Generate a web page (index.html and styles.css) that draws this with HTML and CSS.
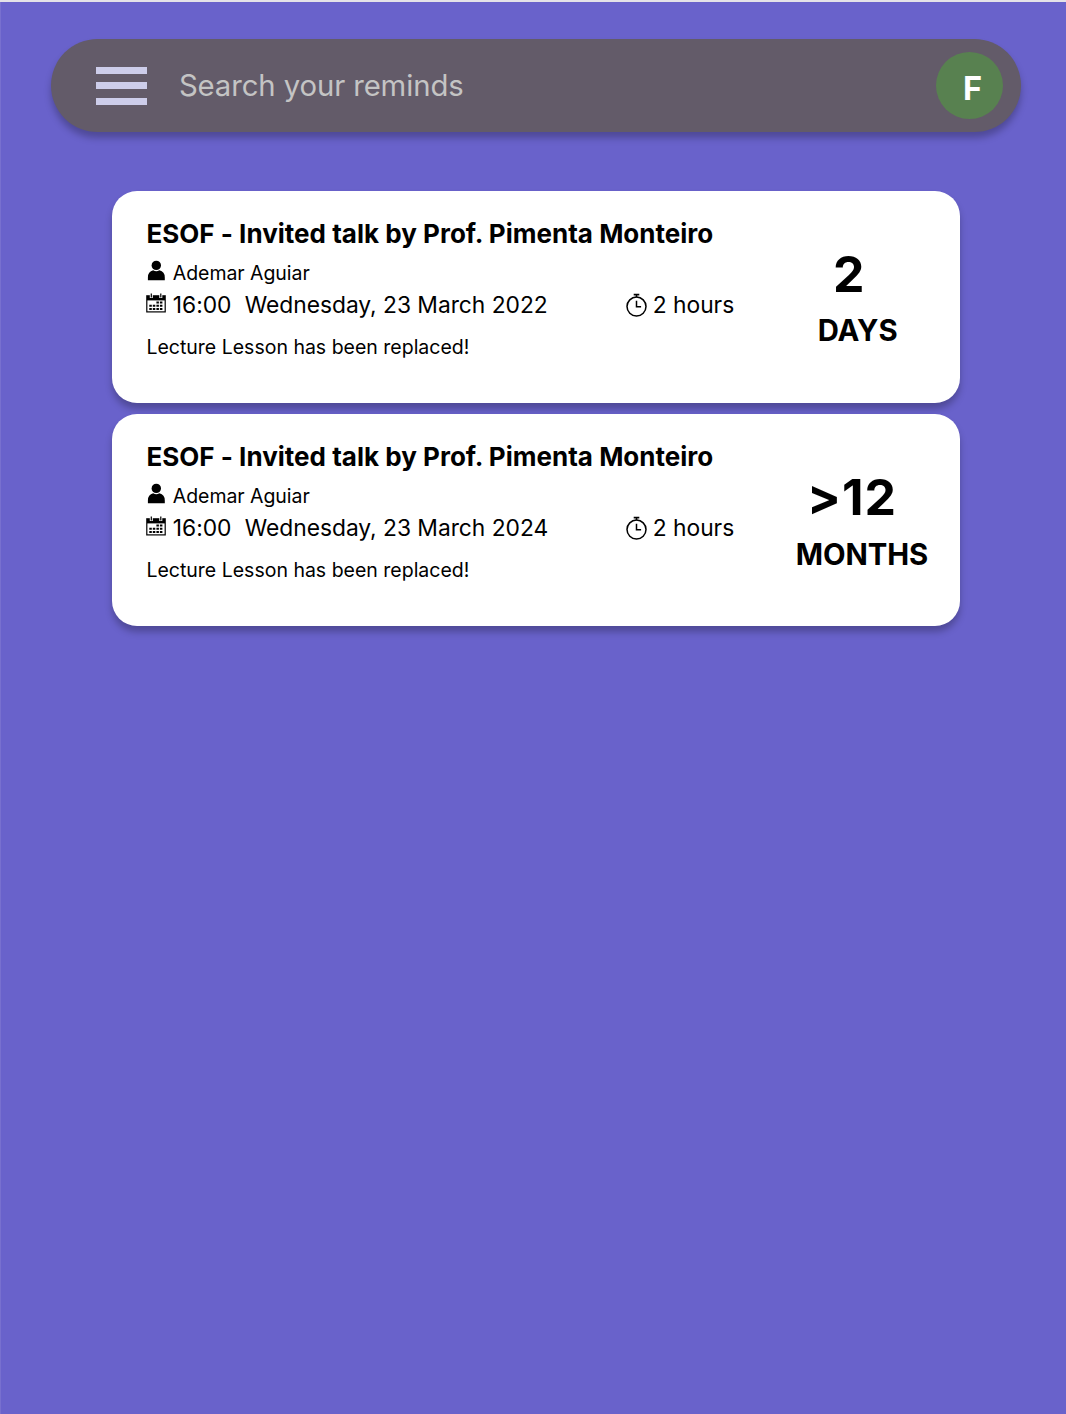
FILE: index.html
```html
<!DOCTYPE html>
<html lang="en">
<head>
<meta charset="utf-8">
<title>Reminds</title>
<link rel="stylesheet" href="styles.css">
</head>
<body>
<svg class="sprite" aria-hidden="true">
  <symbol id="person" viewBox="0 0 20 22">
    <circle cx="10.3" cy="5.4" r="4.7"/>
    <path d="M1.9 20.2V17.4Q1.9 11.4 7.2 10.2Q10.3 12.4 13.4 10.2Q18.8 11.4 18.8 17.4V20.2Z"/>
  </symbol>
  <symbol id="calendar" viewBox="0 0 20 20">
    <path d="M.2 2.2H19.8V19.5H.2Z"/>
    <path fill="#fff" d="M1.4 7.4H18.6V18.3H1.4Z"/>
    <path fill="none" stroke="#fff" stroke-width="3" d="M5.3 0V5M14.8 0V5"/>
    <path fill="none" stroke="#000" stroke-width="1.2" d="M5.3 .4V4.5M14.8 .4V4.5"/>
    <path d="M10.4 8.5h2.5v2h-2.5zM13.9 8.5h2.5v2h-2.5zM3.3 11.7h2.5v2H3.3zM6.8 11.7h2.5v2H6.8zM10.4 11.7h2.5v2h-2.5zM13.9 11.7h2.5v2h-2.5zM3.3 14.9h2.5v2H3.3zM6.8 14.9h2.5v2H6.8zM10.4 14.9h2.5v2h-2.5zM13.9 14.9h2.5v2h-2.5z"/>
  </symbol>
  <symbol id="timer" viewBox="0 0 22 24">
    <g fill="none" stroke="#000" stroke-width="1.5">
      <circle cx="11.5" cy="13.6" r="9.5"/>
      <path d="M11.5 7.8V13.8H16.1M11.5 1.8V4.3"/>
      <path stroke-width="1.7" d="M8.7 1.6H14.3"/>
    </g>
  </symbol>
</svg>
<header class="search">
  <div class="menu"><span></span><span></span><span></span></div>
  <div class="placeholder">Search your reminds</div>
  <div class="avatar">F</div>
</header>
<main class="list">
  <article class="card">
    <div class="details">
      <h2 class="title">ESOF - Invited talk by Prof. Pimenta Monteiro</h2>
      <div class="author"><svg class="icon-person"><use href="#person"/></svg><span>Ademar Aguiar</span></div>
      <div class="when">
        <svg class="icon-calendar"><use href="#calendar"/></svg><span class="time">16:00</span><span class="date">Wednesday, 23 March 2022</span>
        <svg class="icon-timer"><use href="#timer"/></svg><span class="duration">2 hours</span>
      </div>
      <p class="note">Lecture Lesson has been replaced!</p>
    </div>
    <div class="countdown days"><div class="amount">2</div><div class="unit">DAYS</div></div>
  </article>
  <article class="card">
    <div class="details">
      <h2 class="title">ESOF - Invited talk by Prof. Pimenta Monteiro</h2>
      <div class="author"><svg class="icon-person"><use href="#person"/></svg><span>Ademar Aguiar</span></div>
      <div class="when">
        <svg class="icon-calendar"><use href="#calendar"/></svg><span class="time">16:00</span><span class="date">Wednesday, 23 March 2024</span>
        <svg class="icon-timer"><use href="#timer"/></svg><span class="duration">2 hours</span>
      </div>
      <p class="note">Lecture Lesson has been replaced!</p>
    </div>
    <div class="countdown months"><div class="amount">&gt;12</div><div class="unit">MONTHS</div></div>
  </article>
</main>
</body>
</html>
```
FILE: styles.css
```css
* { box-sizing: border-box; }
body {
  margin: 0;
  min-height: 1414px;
  padding: 37.3px 0 0;
  border-top: 2px solid #e4e2e8;
  background: linear-gradient(90deg, #7870cf 1px, #6962cb 1px);
  font-family: Inter, "Liberation Sans", sans-serif;
  color: #000;
}
.sprite { display: none; }
.search {
  display: flex;
  align-items: center;
  width: 970px;
  height: 92.7px;
  margin-left: 50.6px;
  padding: 0 17.5px 0 45.3px;
  border-radius: 47px;
  background: #635b69;
  box-shadow: 0 6px 7px rgba(0, 0, 0, .25);
}
.menu {
  display: flex;
  flex-direction: column;
  gap: 8.7px;
  width: 51px;
}
.menu span { height: 6.8px; background: #cdcdea; }
.placeholder {
  margin-left: 32px;
  padding-top: 1.6px;
  font-size: 29.3px;
  letter-spacing: -.1px;
  line-height: 36px;
  color: #c4c4c4;
}
.avatar {
  width: 67px;
  height: 67px;
  margin-left: auto;
  padding: 3px 0 0 6px;
  border-radius: 50%;
  background: #588150;
  color: #fff;
  font-size: 32.5px;
  font-weight: 700;
  line-height: 67px;
  text-align: center;
}
.list {
  display: flex;
  flex-direction: column;
  gap: 11px;
  width: 848px;
  margin: 58.7px 0 0 112.4px;
}
.card {
  display: flex;
  height: 212px;
  padding-left: 34px;
  border-radius: 25px;
  background: #fff;
  box-shadow: 0 6px 7px rgba(0, 0, 0, .25);
}
.details { width: 600px; padding-top: 26px; }
.title {
  margin: 0;
  font-size: 26px;
  font-weight: 700;
  letter-spacing: .015px;
  line-height: 34px;
  white-space: nowrap;
}
.author {
  display: flex;
  align-items: center;
  height: 32px;
  margin-top: 6px;
  font-size: 19.5px;
  letter-spacing: -.05px;
}
.icon-person { width: 20px; height: 22px; margin: -3px 6.4px 0 0; }
.when {
  display: flex;
  align-items: center;
  height: 32px;
  font-size: 22.8px;
  letter-spacing: -.03px;
  white-space: nowrap;
}
.icon-calendar { width: 20px; height: 20px; margin: -3px 6.4px 0 0; }
.time { width: 59px; }
.date { margin-left: 13px; width: 380px; }
.icon-timer { width: 22px; height: 24px; margin-right: 6px; }
.note { margin: 14px 0 0; font-size: 19.5px; line-height: 24px; }
.countdown {
  display: flex;
  flex-direction: column;
  align-items: center;
  width: 140px;
  padding-top: 53px;
  font-weight: 700;
}
.days { margin-left: 41.3px; }
.months { margin-left: 45.6px; }
.amount { font-size: 50px; line-height: 60px; }
.unit { margin-top: 9px; font-size: 29.3px; line-height: 36px; }
.days .amount { padding-right: 18px; }
.months .amount { padding-right: 20px; letter-spacing: 1px; }
.months .unit { margin-top: 10px; letter-spacing: -.1px; }
```
